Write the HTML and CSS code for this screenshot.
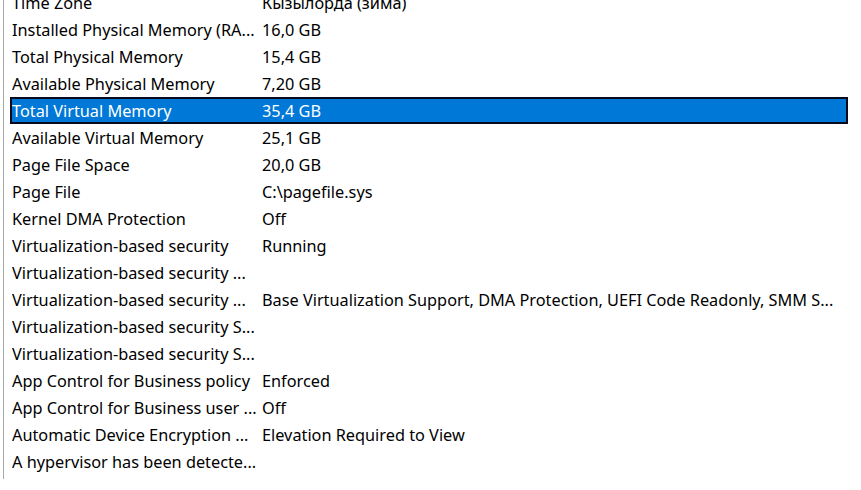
FILE: index.html
```html
<!DOCTYPE html>
<html lang="en">
<head>
  <meta charset="UTF-8" />
  <title>System Information</title>
  <link rel="stylesheet" href="styles.css">
</head>
<body>
  <div class="pane">
    <div class="list">
      <div class="row"><span class="item">Time Zone</span><span class="value">Кызылорда (зима)</span></div>
      <div class="row"><span class="item">Installed Physical Memory (RA...</span><span class="value">16,0 GB</span></div>
      <div class="row"><span class="item">Total Physical Memory</span><span class="value">15,4 GB</span></div>
      <div class="row"><span class="item">Available Physical Memory</span><span class="value">7,20 GB</span></div>
      <div class="row selected"><span class="item">Total Virtual Memory</span><span class="value">35,4 GB</span></div>
      <div class="row"><span class="item">Available Virtual Memory</span><span class="value">25,1 GB</span></div>
      <div class="row"><span class="item">Page File Space</span><span class="value">20,0 GB</span></div>
      <div class="row"><span class="item">Page File</span><span class="value">C:\pagefile.sys</span></div>
      <div class="row"><span class="item">Kernel DMA Protection</span><span class="value">Off</span></div>
      <div class="row"><span class="item">Virtualization-based security</span><span class="value">Running</span></div>
      <div class="row"><span class="item">Virtualization-based security ...</span><span class="value"></span></div>
      <div class="row"><span class="item">Virtualization-based security ...</span><span class="value">Base Virtualization Support, DMA Protection, UEFI Code Readonly, SMM S...</span></div>
      <div class="row"><span class="item">Virtualization-based security S...</span><span class="value"></span></div>
      <div class="row"><span class="item">Virtualization-based security S...</span><span class="value"></span></div>
      <div class="row"><span class="item">App Control for Business policy</span><span class="value">Enforced</span></div>
      <div class="row"><span class="item">App Control for Business user ...</span><span class="value">Off</span></div>
      <div class="row"><span class="item">Automatic Device Encryption ...</span><span class="value">Elevation Required to View</span></div>
      <div class="row"><span class="item">A hypervisor has been detecte...</span><span class="value"></span></div>
    </div>
  </div>
</body>
</html>
```

FILE: styles.css
```css
body {
  margin: 0;
  background-color: #ffffff;
  font-family: 'Segoe UI', 'Noto Sans', sans-serif;
  font-size: 16.3px;
  color: #000000;
  overflow: hidden;
}
.pane {
  margin-left: 3px;
  border-left: 1px solid #a9a9a9;
  height: 490px;
  padding-left: 6px;
}
.list {
  margin-top: -11px;
  width: 838px;
}
.row {
  display: grid;
  grid-template-columns: 250px 1fr;
  height: 27px;
  box-sizing: border-box;
  border: 2px solid transparent;
  align-items: center;
  white-space: nowrap;
}
.row .item,
.row .value {
  overflow: hidden;
}
.row.selected {
  background-color: #0078d7;
  border-color: #0a0a1e;
  color: #ffffff;
}
```
